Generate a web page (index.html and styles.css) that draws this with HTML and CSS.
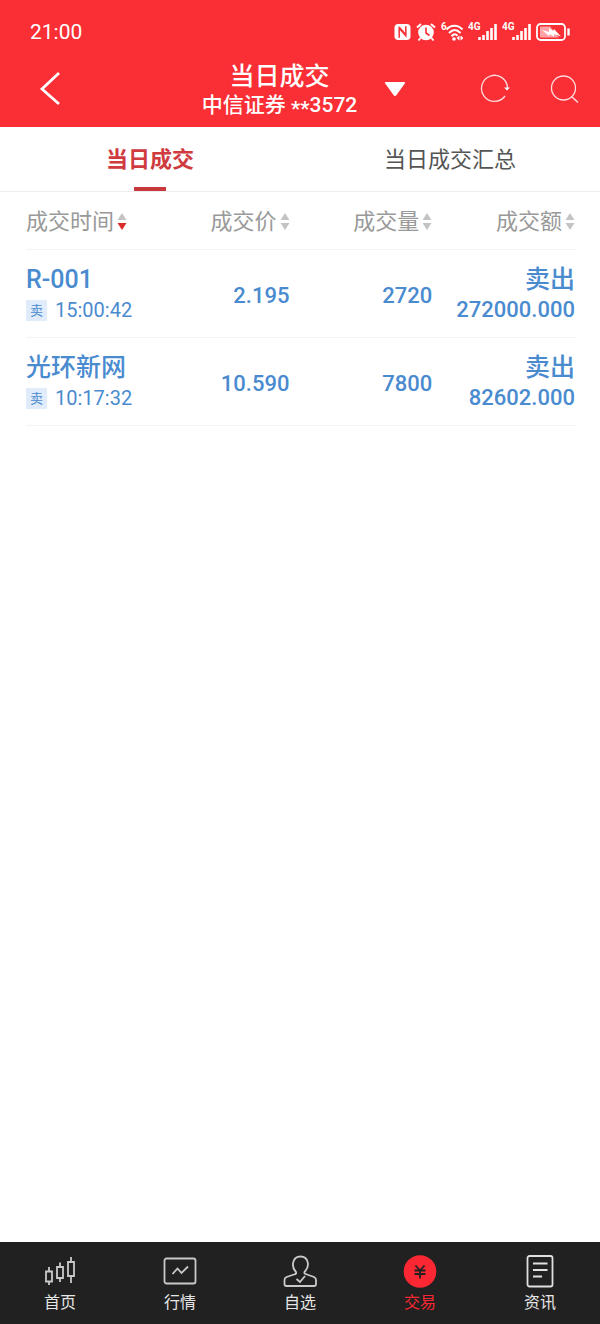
FILE: index.html
```html
<!DOCTYPE html>
<html lang="zh-CN">
<head>
  <meta charset="UTF-8">
  <title>当日成交</title>
  <meta name="viewport" content="width=device-width, initial-scale=1">
  <link rel="stylesheet" href="styles.css">
</head>
<body>
<header class="top">
  <div class="status">
    <span class="clock">21:00</span>
    <div class="status-icons">
      <svg width="17" height="20" viewBox="0 0 18 20">
        <rect x="0.500" y="1.500" width="17" height="17" rx="4" fill="#fff"/>
        <path d="M5.500 16V6L12.500 14V4" fill="none" stroke="#fa2e35" stroke-width="1.600"/>
        <path d="M5.500 4.500L12.500 12.500" fill="none" stroke="#fa2e35" stroke-width="1.200"/>
      </svg>
      <svg width="20" height="20" viewBox="0 0 20 20">
        <circle cx="10" cy="10.500" r="7.800" fill="#fff"/>
        <path d="M1 5.500L5 2M15 2l4 3.500M4.500 16L2.500 18.500M15.500 16l2 2.500" stroke="#fff" stroke-width="2"/>
        <path d="M10 5.500V11l3.500 2.500" fill="none" stroke="#fa2e35" stroke-width="1.600"/>
      </svg>
      <svg width="22" height="20" viewBox="0 0 22 20">
        <text x="0" y="8" class="net">6</text>
        <path d="M5.500 7.500C10 2.500 17 2.500 21.500 7.500M8 11c4-4 7.500-4 11.500 0M10.500 14.200c2.500-2.500 4-2.500 6 -.5" fill="none" stroke="#fff" stroke-width="2"/>
        <circle cx="13" cy="17" r="1.800" fill="#fff"/>
        <path d="M18.500 13.500v5l-3-2.500zM19.500 13.500v5l3-2.500z" fill="#fff"/>
      </svg>
      <svg width="29" height="20" viewBox="0 0 29 20">
        <text x="0" y="8" class="net">4G</text>
        <path d="M11.500 18v-3M15.500 18v-5M19.500 18v-9M23.500 18V6M27.500 18V2" stroke="#fff" stroke-width="2.600"/>
      </svg>
      <svg width="29" height="20" viewBox="0 0 29 20">
        <text x="0" y="8" class="net">4G</text>
        <path d="M11.500 18v-3M15.500 18v-5M19.500 18v-9M23.500 18V6M27.500 18V2" stroke="#fff" stroke-width="2.600"/>
      </svg>
      <svg width="34" height="20" viewBox="0 0 34 20">
        <rect x="1" y="2" width="28" height="16" rx="3.500" fill="none" stroke="#fff" stroke-width="1.800"/>
        <path d="M4 4.500h10l9 11H4z" fill="#ffa3a6"/>
        <path d="M6 8l7 2V6l4 3 1-2 7 7.500-7-2.500v3l-4-3-1 2z" fill="#fff"/>
        <path d="M32.500 6.500v7" stroke="#fff" stroke-width="2.400"/>
      </svg>
    </div>
  </div>
  <div class="bar">
    <button type="button" class="icon-btn back" aria-label="返回">
      <svg width="44" height="36" viewBox="0 0 44 36"><path d="M31 2L14 18l17 15" fill="none" stroke="#fff" stroke-width="2.800"/></svg>
    </button>
    <button type="button" class="account">
      <span class="names">
        <span class="title">当日成交</span>
        <span class="broker">中信证券 <span class="mask">**</span>3572</span>
      </span>
      <svg width="22" height="16" viewBox="0 0 22 16"><path d="M2 1h18q2 0 .8 1.600L12.500 14q-1.500 2-3 0L1.200 2.600Q0 1 2 1z" fill="#fff"/></svg>
    </button>
    <div class="actions">
      <button type="button" class="icon-btn" aria-label="刷新">
        <svg width="30" height="30" viewBox="0 0 30 30">
          <path d="M27.500 14A13 13 0 1 0 25 22" fill="none" stroke="#ffdadb" stroke-width="1.300"/>
          <path d="M24 13.500h6l-3 3z" fill="#fff"/>
        </svg>
      </button>
      <button type="button" class="icon-btn" aria-label="搜索">
        <svg width="30" height="30" viewBox="0 0 30 30">
          <circle cx="13.500" cy="14" r="12" fill="none" stroke="#ffdadb" stroke-width="1.300"/>
          <path d="M21.500 22.500l6.500 6" stroke="#ffdadb" stroke-width="1.600"/>
        </svg>
      </button>
    </div>
  </div>
</header>

<nav class="tabs">
  <a href="#" class="tab active">当日成交</a>
  <a href="#" class="tab">当日成交汇总</a>
</nav>

<main class="content">
  <table class="deals">
    <thead>
      <tr>
        <th class="col-name"><button type="button" class="sort desc">成交时间<svg width="10" height="18" viewBox="0 0 10 18"><path class="up" d="M5 0l4.500 7h-9z"/><path class="down" d="M.5 10h9L5 17z"/></svg></button></th>
        <th><button type="button" class="sort">成交价<svg width="10" height="18" viewBox="0 0 10 18"><path class="up" d="M5 0l4.500 7h-9z"/><path class="down" d="M.5 10h9L5 17z"/></svg></button></th>
        <th><button type="button" class="sort">成交量<svg width="10" height="18" viewBox="0 0 10 18"><path class="up" d="M5 0l4.500 7h-9z"/><path class="down" d="M.5 10h9L5 17z"/></svg></button></th>
        <th><button type="button" class="sort">成交额<svg width="10" height="18" viewBox="0 0 10 18"><path class="up" d="M5 0l4.500 7h-9z"/><path class="down" d="M.5 10h9L5 17z"/></svg></button></th>
      </tr>
    </thead>
    <tbody>
      <tr>
        <td class="col-name">
          <div class="stock">R-001</div>
          <div class="time"><span class="badge">卖</span>15:00:42</div>
        </td>
        <td>2.195</td>
        <td>2720</td>
        <td><div class="side">卖出</div><div class="amount">272000.000</div></td>
      </tr>
      <tr>
        <td class="col-name">
          <div class="stock">光环新网</div>
          <div class="time"><span class="badge">卖</span>10:17:32</div>
        </td>
        <td>10.590</td>
        <td>7800</td>
        <td><div class="side">卖出</div><div class="amount">82602.000</div></td>
      </tr>
    </tbody>
  </table>
</main>

<nav class="bottom">
  <a href="#" class="item">
    <svg width="34" height="34" viewBox="0 0 34 34" fill="none" stroke="#c9c9c9" stroke-width="1.800">
      <path d="M3 17.500h6v10H3zM14 13h6v11h-6zM25 8h6v14h-6zM6 13v4.500M6 27.500V31M17 8.500V13M17 24v4M28 3v5M28 22v7"/>
    </svg>
    首页
  </a>
  <a href="#" class="item">
    <svg width="34" height="34" viewBox="0 0 34 34" fill="none" stroke="#c9c9c9" stroke-width="1.800">
      <rect x="1.500" y="4.500" width="31" height="25" rx="2"/>
      <path d="M9.500 20l5-5.500 4 4.500 6.500-6.500"/>
    </svg>
    行情
  </a>
  <a href="#" class="item">
    <svg width="34" height="34" viewBox="0 0 34 34" fill="none" stroke="#c9c9c9" stroke-width="1.800">
      <path d="M13 18C8 13 9 2.500 17.500 2.500S27 13 21.500 18C21 19.500 22 20 24 20.500L31 23q2 1 2 3v4q0 2-2 2H3.500q-2 0-2-2V26q0-2 2-3L11 20.500C13 20 13.500 19.500 13 18z"/>
      <path d="M13.500 25l3.500 3 5-6"/>
    </svg>
    自选
  </a>
  <a href="#" class="item active">
    <svg width="34" height="34" viewBox="0 0 34 34">
      <circle cx="17" cy="17.500" r="16.300" fill="#fb2733"/>
      <path d="M12.500 11.500l4.500 5 4.500-5M11.500 16.500h11M11.500 20h11M17 16.500V24.500" fill="none" stroke="#212121" stroke-width="1.800"/>
    </svg>
    交易
  </a>
  <a href="#" class="item">
    <svg width="34" height="34" viewBox="0 0 34 34" fill="none" stroke="#e0e0e0" stroke-width="1.800">
      <rect x="4.500" y="2" width="25" height="30.500" rx="2"/>
      <path d="M10 9.500h14.500M10 16h14.500M10 22.500h9"/>
    </svg>
    资讯
  </a>
</nav>
</body>
</html>
```

FILE: styles.css
```css
* { box-sizing: border-box; }
body { margin: 0; min-height: 100vh; display: flex; flex-direction: column; background: #fff; font-family: Roboto, 'Noto Sans CJK SC', sans-serif; }
button { border: 0; padding: 0; background: none; color: inherit; font: inherit; cursor: pointer; }
a { text-decoration: none; }
svg { display: block; flex: none; }

.top { background: #fa2e35; color: #fff; padding-top: 18px; }
.status { display: flex; justify-content: space-between; align-items: center; height: 28px; padding: 0 30px; }
.clock { font-size: 21px; }
.status-icons { display: flex; gap: 5px; }
.net { font-size: 10px; font-weight: 700; fill: #fff; }
.bar { display: grid; grid-template-columns: 1fr auto 1fr; align-items: center; height: 81px; padding: 4px 20px 0 28px; }
.back { justify-self: start; }
.account { display: flex; align-items: center; gap: 27px; }
.names { display: flex; flex-direction: column; align-items: center; padding-top: 5px; }
.title { font-size: 25px; line-height: 28px; font-weight: 500; }
.broker { font-size: 21px; line-height: 28px; font-weight: 500; }
.mask { vertical-align: -4px; line-height: 20px; }
.actions { justify-self: end; display: flex; gap: 40px; }

.tabs { display: flex; height: 65px; border-bottom: 1px solid #eee; }
.tab { flex: 1; display: flex; flex-direction: column; align-items: center; padding-top: 2px; font-size: 22px; line-height: 62px; color: #555; }
.tab.active { color: #cf3b3f; font-weight: 700; }
.tab.active::after { content: ""; width: 32px; height: 4px; margin-top: -4px; background: #c8393d; }

.content { flex: 1; padding: 0 25px 0 26px; }
.deals { width: 100%; border-collapse: collapse; table-layout: fixed; }
th, td { padding: 4px 0 0; border-bottom: 1px solid #f3f3f3; text-align: right; white-space: nowrap; }
th { height: 57px; font-size: 22px; font-weight: 400; color: #999; }
td { height: 88px; font-size: 22px; font-weight: 500; color: #4a8bd0; }
.col-name { width: 22%; text-align: left; }
.sort { display: inline-flex; align-items: center; gap: 3px; line-height: 28px; }
.up, .down { fill: #c4c4c4; }
.desc .down { fill: #dc2b2b; }
.stock, .side { font-size: 25px; line-height: 30px; }
.time { display: flex; align-items: center; gap: 8px; font-size: 20px; line-height: 30px; font-weight: 400; }
.amount { line-height: 30px; }
.badge { width: 21px; height: 21px; background: #e0ecfa; font-size: 13px; line-height: 21px; text-align: center; }

.bottom { display: flex; height: 82px; padding-top: 12px; background: #212121; }
.item { flex: 1; display: flex; flex-direction: column; align-items: center; gap: 3px; font-size: 16px; line-height: 24px; color: #e6e6e6; }
.item.active { color: #fb2733; }
```
